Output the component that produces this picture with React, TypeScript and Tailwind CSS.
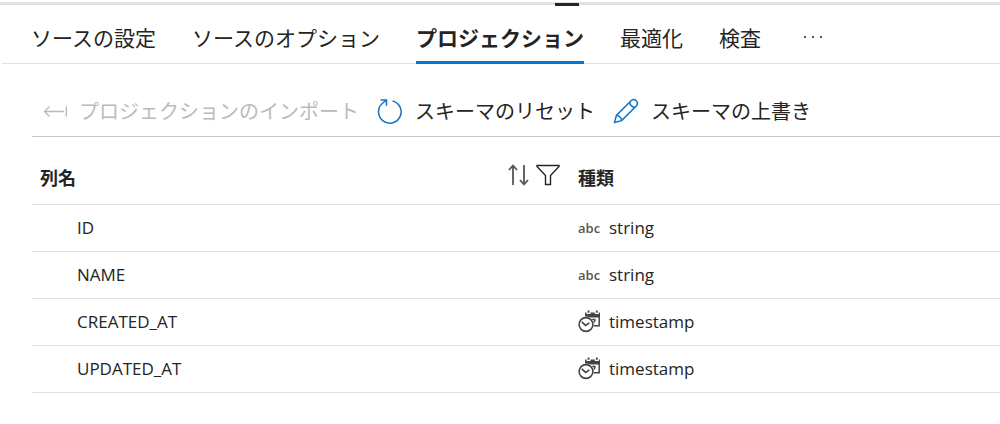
import * as React from "react";

const tabs = ["ソースの設定", "ソースのオプション", "プロジェクション", "最適化", "検査"];

const columns = [
  { name: "ID", type: "string" },
  { name: "NAME", type: "string" },
  { name: "CREATED_AT", type: "timestamp" },
  { name: "UPDATED_AT", type: "timestamp" },
];

function ImportIcon() {
  return (
    <svg className="h-6 w-6" viewBox="0 0 24 24" fill="none" stroke="currentColor" strokeWidth="1.4" aria-hidden="true">
      <path d="M21 12.5H1.5M6.5 7.5L1.5 12.5L6.5 17.5M23.3 7.5V17.5" />
    </svg>
  );
}

function ResetIcon() {
  return (
    <svg className="h-[26px] w-[26px] text-[#1272c6]" viewBox="0 0 26 26" fill="none" stroke="currentColor" strokeWidth="1.5" aria-hidden="true">
      <path d="M15.6 2.9A11.3 11.3 0 1 1 5.8 5L9.3 2.2" />
      <path d="M3.6 1.9H9.5V7.8" />
    </svg>
  );
}

function PencilIcon() {
  return (
    <svg className="h-[26px] w-[26px] text-[#1272c6]" viewBox="0 0 26 26" fill="none" stroke="currentColor" strokeWidth="1.5" aria-hidden="true">
      <path d="M1.5 24.5L3.4 17.4L18.3 2.5A3.7 3.7 0 0 1 23.5 7.7L8.6 22.6Z" />
      <path d="M16.6 4.2C17 7 19 9 21.8 9.4M3.4 17.4C6 17.4 8.6 20 8.6 22.6" />
    </svg>
  );
}

function SortIcon() {
  return (
    <svg className="h-6 w-[22px] text-[#555]" viewBox="0 0 22 24" fill="none" stroke="currentColor" strokeWidth="1.8" aria-hidden="true">
      <path d="M5 22V2.5M1 7L5 2.5L9 7M16 2V21.5M12 17L16 21.5L20 17" />
    </svg>
  );
}

function FilterIcon() {
  return (
    <svg className="h-6 w-6 text-[#252423]" viewBox="0 0 24 24" fill="none" stroke="currentColor" strokeWidth="1.4" aria-hidden="true">
      <path d="M1 2.5H23V3.5L14.5 12.5V21.5H9.5V12.5L1 3.5Z" />
    </svg>
  );
}

function TimestampIcon() {
  return (
    <svg className="h-[23px] w-[23px] text-[#444]" viewBox="0 0 23 23" fill="none" stroke="currentColor" aria-hidden="true">
      <path d="M7 2.5H22V7.5H7Z" fill="currentColor" stroke="none" />
      <path d="M10.5 0V4M18.8 0V4" stroke="white" strokeWidth="4" />
      <path d="M10.5 0.5V2.8M18.8 0.5V2.8" strokeWidth="1.8" />
      <path d="M21.2 5V15.7H15M14 9.6H16.8V11L15 13.4" strokeWidth="1.5" />
      <circle cx="8" cy="14.5" r="8" fill="white" stroke="none" />
      <circle cx="8" cy="14.5" r="6.9" strokeWidth="1.6" />
      <path d="M3.8 11.8L7.6 15.4L11.4 12.8" strokeWidth="1.6" />
    </svg>
  );
}

export default function App() {
  return (
    <div className="bg-white font-['Open_Sans','Noto_Sans_CJK_JP',sans-serif] text-[#252423]">
      <div className="relative mt-[2px] h-[3px] bg-[#e1e1e1]">
        <div className="absolute top-px left-[555px] h-[3px] w-6 bg-[#252423]" />
      </div>

      <nav className="ml-[2px] flex h-[59px] gap-9 border-b border-[#e1e1e1] pl-[29px] font-['Noto_Sans_CJK_JP',sans-serif] text-[21px] leading-[30px]">
        {tabs.map((tab) => {
          const active = tab === "プロジェクション";
          return (
            <button
              key={tab}
              type="button"
              aria-current={active ? "page" : undefined}
              className={
                active
                  ? "h-[59px] shrink-0 border-b-3 border-[#0078d4] pt-[7px] font-bold"
                  : "h-[59px] shrink-0 border-b-3 border-transparent pt-[7px]"
              }
            >
              {tab}
            </button>
          );
        })}
        <button type="button" aria-label="その他" className="flex h-[59px] items-center pt-2 pl-[6px]">
          <svg className="h-2 w-5" viewBox="0 0 20 8" fill="currentColor" aria-hidden="true">
            <circle cx="2" cy="2" r="1" />
            <circle cx="10" cy="2" r="1" />
            <circle cx="18" cy="2" r="1" />
          </svg>
        </button>
      </nav>

      <main className="pl-8">
        <div className="flex h-[73px] items-center gap-[18px] border-b border-[#c8c8c8] pt-[22px] pl-[11px] font-['Noto_Sans_CJK_JP',sans-serif] text-[20px] leading-7">
          <button type="button" disabled className="flex shrink-0 items-center gap-3 text-[#bdbbb9]">
            <ImportIcon />
            プロジェクションのインポート
          </button>
          <button type="button" className="flex shrink-0 items-center gap-3">
            <ResetIcon />
            スキーマのリセット
          </button>
          <button type="button" className="flex shrink-0 items-center gap-3">
            <PencilIcon />
            スキーマの上書き
          </button>
        </div>

        <table className="w-full table-fixed border-collapse text-left text-[17px]">
          <thead>
            <tr className="h-[67px] border-b border-[#e1e1e1]">
              <th className="w-[546px] pt-4 pl-2 text-[18px] font-bold">
                <div className="flex items-center justify-between pr-[18px]">
                  列名
                  <span className="flex gap-[6px] pb-[6px]">
                    <button type="button" aria-label="並べ替え">
                      <SortIcon />
                    </button>
                    <button type="button" aria-label="フィルター">
                      <FilterIcon />
                    </button>
                  </span>
                </div>
              </th>
              <th className="pt-4 text-[18px] font-bold">種類</th>
            </tr>
          </thead>
          <tbody>
            {columns.map((column) => (
              <tr key={column.name} className="h-[47px] border-b border-[#e1e1e1]">
                <td className="pl-[45px]">{column.name}</td>
                <td>
                  <div className="flex items-center gap-2">
                    {column.type === "timestamp" ? (
                      <TimestampIcon />
                    ) : (
                      <span className="w-[23px] text-[13px] leading-5 font-semibold text-[#555]">abc</span>
                    )}
                    {column.type}
                  </div>
                </td>
              </tr>
            ))}
          </tbody>
        </table>
      </main>
    </div>
  );
}
